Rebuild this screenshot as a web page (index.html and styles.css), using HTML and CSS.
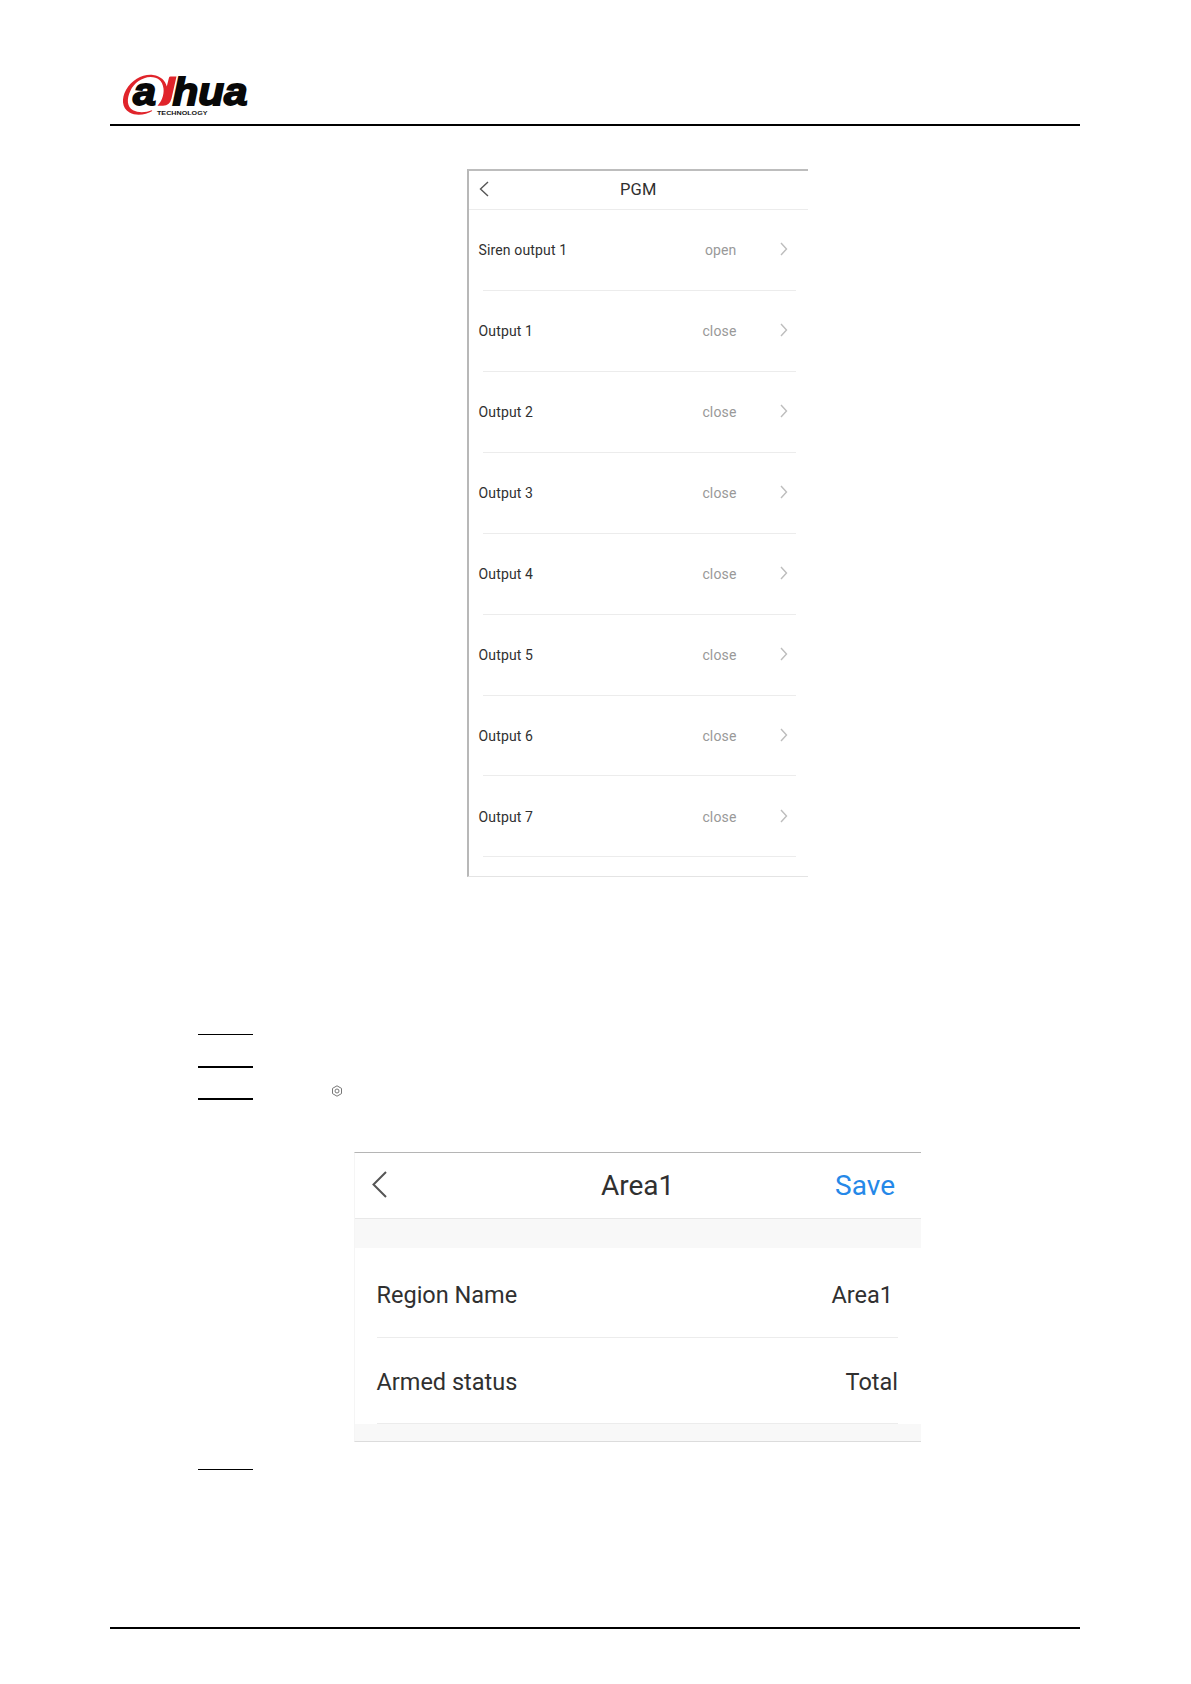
FILE: index.html
```html
<!DOCTYPE html>
<html lang="en">
<head>
    <meta charset="UTF-8">
    <meta name="viewport" content="width=device-width, initial-scale=1.0">
    <title>Dahua Technology - User's Manual</title>
    <link rel="stylesheet" href="styles.css">
</head>
<body>
    <header class="page-header">
        <svg class="logo" viewBox="0 0 180 64" width="180" height="64">
            <text class="logo-name" x="33" y="45" textLength="23" lengthAdjust="spacingAndGlyphs">a</text>
            <text class="logo-name" x="72.500" y="45" textLength="75" lengthAdjust="spacingAndGlyphs">hua</text>
            <path fill="#e0242b" d="M52.300 51C46 54.800 36 56.200 29.500 52.500C21.500 48 21.500 38 26 30C32 19.500 43 13.800 53 15C61 16 65.500 21 66.800 26.500L69 17.500Q69.300 16.500 70.500 16.500H76.500L71.500 38.500Q69.800 45.500 63 45.800H57.500C61.500 41.500 64.300 35 63.500 28.500C62.500 20.500 57.500 17 50.500 17C42 17.200 34 23 30.300 31C26.500 39 27 47 33 50.300C38.500 53 46 52.500 51.800 50.200Z"/>
            <text class="logo-tag" x="57" y="55" textLength="50.500" lengthAdjust="spacingAndGlyphs">TECHNOLOGY</text>
        </svg>
    </header>

    <main>
        <!-- PGM output list -->
        <section class="pgm">
            <div class="pgm-bar">
                <svg class="back" viewBox="0 0 10 16" width="10" height="16"><path d="M9 1L1.500 8L9 15"/></svg>
                <h2>PGM</h2>
            </div>
            <ul class="pgm-list">
                <li><span>Siren output 1</span><em>open</em><svg viewBox="0 0 8 14" width="8" height="14"><path d="M1 1L6.500 7L1 13"/></svg></li>
                <li><span>Output 1</span><em>close</em><svg viewBox="0 0 8 14" width="8" height="14"><path d="M1 1L6.500 7L1 13"/></svg></li>
                <li><span>Output 2</span><em>close</em><svg viewBox="0 0 8 14" width="8" height="14"><path d="M1 1L6.500 7L1 13"/></svg></li>
                <li><span>Output 3</span><em>close</em><svg viewBox="0 0 8 14" width="8" height="14"><path d="M1 1L6.500 7L1 13"/></svg></li>
                <li><span>Output 4</span><em>close</em><svg viewBox="0 0 8 14" width="8" height="14"><path d="M1 1L6.500 7L1 13"/></svg></li>
                <li><span>Output 5</span><em>close</em><svg viewBox="0 0 8 14" width="8" height="14"><path d="M1 1L6.500 7L1 13"/></svg></li>
                <li><span>Output 6</span><em>close</em><svg viewBox="0 0 8 14" width="8" height="14"><path d="M1 1L6.500 7L1 13"/></svg></li>
                <li><span>Output 7</span><em>close</em><svg viewBox="0 0 8 14" width="8" height="14"><path d="M1 1L6.500 7L1 13"/></svg></li>
            </ul>
        </section>

        <!-- step rules -->
        <div class="steps">
            <div class="step thin"></div>
            <div class="step"></div>
            <div class="step">
                <svg class="gear" viewBox="0 0 12 12" width="12" height="12">
                    <path d="M6 .8L10.500 3.400V8.600L6 11.200L1.500 8.600V3.400Z"/>
                    <circle cx="6" cy="6" r="2"/>
                </svg>
            </div>
        </div>

        <!-- area settings -->
        <section class="area">
            <div class="area-bar">
                <svg class="back" viewBox="0 0 15 27" width="15" height="27"><path d="M14 1L1.500 13.500L14 26"/></svg>
                <h2>Area1</h2>
                <a class="save">Save</a>
            </div>
            <div class="gap"></div>
            <div class="area-row name"><span>Region Name</span><span class="value">Area1</span></div>
            <div class="area-row status"><span>Armed status</span><span class="value">Total</span></div>
            <div class="gap bottom"></div>
        </section>

        <div class="step thin last"></div>
    </main>

    <footer class="page-footer"></footer>
</body>
</html>
```

FILE: styles.css
```css
* {
    margin: 0;
    padding: 0;
    box-sizing: border-box;
}

body {
    width: 1191px;
    height: 1684px;
    padding: 60px 111px 0 110px;
    background: #fff;
    color: #303030;
    font-family: Roboto, "Liberation Sans", sans-serif;
    overflow: hidden;
}

svg {
    display: block;
    fill: none;
}

h2 {
    font-weight: 400;
}

/* header */
.page-header {
    height: 66px;
    border-bottom: 2px solid #000;
}

.logo {
    margin-left: -10px;
}

.logo-name {
    font: italic 700 39px "Liberation Sans", sans-serif;
    fill: #080808;
    stroke: #080808;
    stroke-width: 1.8;
}

.logo-tag {
    font: 700 6.2px "Liberation Sans", sans-serif;
    fill: #151515;
}

/* PGM list */
.pgm {
    width: 341px;
    height: 708px;
    margin: 43px 0 0 357px;
    border-top: 2px solid #bdbdbd;
    border-left: 2px solid #b8b8b8;
    border-bottom: 1px solid #e4e4e4;
}

.pgm-bar {
    display: grid;
    grid-template-columns: 141px 1fr;
    align-items: center;
    height: 39px;
    padding-bottom: 2px;
    border-bottom: 1px solid #ececec;
}

.pgm-bar h2 {
    padding-left: 10px;
    font-size: 16.5px;
    letter-spacing: 0.2px;
}

.pgm-bar .back {
    margin-left: 10px;
}

.back path {
    stroke: #555;
    stroke-width: 1.4;
}

.pgm-list {
    list-style: none;
    padding: 0 12px 0 9.5px;
}

.pgm-list li {
    display: flex;
    align-items: center;
    height: 80.93px;
    font-size: 14px;
    letter-spacing: 0.15px;
    background: linear-gradient(#ececec, #ececec) 4px 100% / 316px 1px no-repeat;
}

.pgm-list em {
    margin-left: auto;
    font-style: normal;
    color: #999;
}

.pgm-list svg {
    margin: -2px 8.5px 0 43px;
}

.pgm-list path {
    stroke: #bdbdbd;
    stroke-width: 1.4;
}

/* steps */
.steps {
    margin: 157px 0 0 88px;
}

.step {
    display: flow-root;
    width: 55px;
    height: 32px;
    border-bottom: 2px solid #000;
}

.step.thin {
    height: 1px;
    border-bottom-width: 1px;
}

.steps .thin + .step {
    height: 33px;
}

.gear {
    margin: 17px 0 0 133px;
}

.gear path,
.gear circle {
    stroke: #777;
    stroke-width: 1;
}

/* area panel */
.area {
    width: 567px;
    height: 290px;
    margin: 52px 0 0 244px;
    border-top: 1px solid #b5b5b5;
    border-bottom: 1px solid #dcdcdc;
    border-left: 1px solid #f5f5f5;
}

.area-bar {
    display: grid;
    grid-template-columns: 246px 1fr auto;
    align-items: center;
    height: 66px;
    padding-right: 26px;
    border-bottom: 1px solid #e8e8e8;
    font-size: 28px;
}

.area-bar h2 {
    font-size: 28px;
}

.area-bar .back {
    margin: -2px 0 0 17px;
}

.area-bar .back path {
    stroke-width: 2;
}

.save {
    color: #2588e8;
}

.gap {
    height: 29px;
    background: #f8f8f8;
}

.gap.bottom {
    height: 17px;
}

.area-row {
    display: flex;
    justify-content: space-between;
    align-items: center;
    height: 90px;
    padding-top: 4px;
    margin: 0 23px 0 21.5px;
    border-bottom: 1px solid #ececec;
    font-size: 23.5px;
}

.area-row.name .value {
    margin-right: 5px;
}

.area-row.status {
    height: 86px;
    padding-top: 2px;
}

.last {
    margin: 27px 0 0 88px;
}

.page-footer {
    height: 2px;
    margin-top: 157px;
    background: #000;
}
```
